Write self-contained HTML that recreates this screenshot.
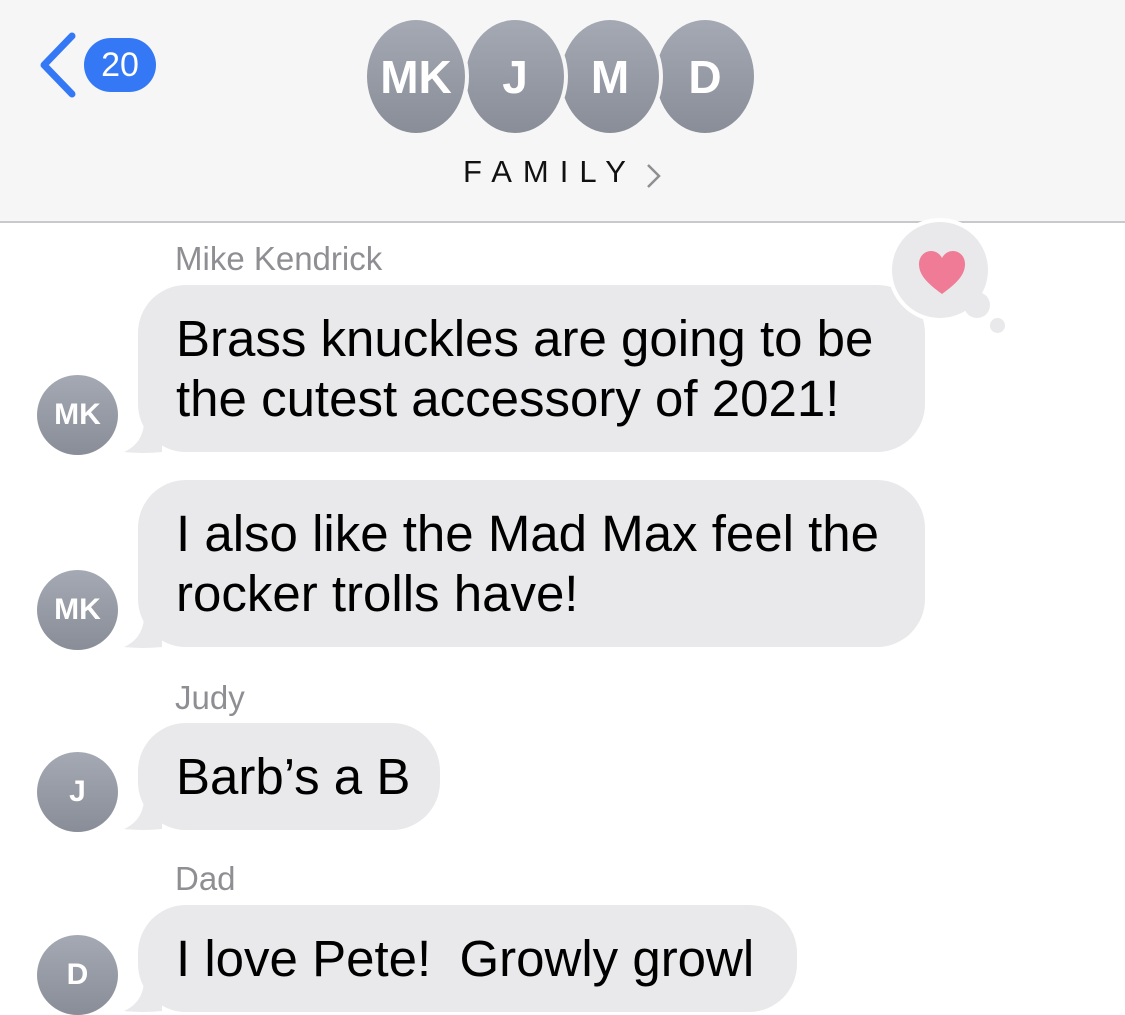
<!DOCTYPE html>
<html><head><meta charset="utf-8"><style>
*{margin:0;padding:0;box-sizing:border-box}
body{width:1125px;height:1015px;overflow:hidden;background:#fff;font-family:"Liberation Sans",Arial,sans-serif;position:relative}
.hdr{position:absolute;left:0;top:0;width:1125px;height:223px;background:#f6f6f6;border-bottom:2px solid #c9c9cb}
.ga{position:absolute;width:106px;height:121px;top:16px;border-radius:50%;background:linear-gradient(#a5a9b3,#898d97);border:4px solid #f6f6f6;color:#fff;font-size:46px;font-weight:bold;display:flex;align-items:center;justify-content:center}
.badge{position:absolute;left:84px;top:38px;width:72px;height:54px;border-radius:27px;background:#3478f6;color:#fff;font-size:34px;display:flex;align-items:center;justify-content:center}
.fam{position:absolute;left:463px;top:154px;font-size:31px;letter-spacing:11px;color:#111}
.name{position:absolute;left:175px;font-size:33px;color:#8e8e93}
.b{position:absolute;left:138px;background:#e9e9eb;border-radius:48px;font-size:51px;line-height:60px;color:#000;padding:0 0 0 38px;display:flex;align-items:center}
.av{position:absolute;left:37px;width:81px;height:80px;border-radius:50%;background:linear-gradient(#a5a9b3,#898d97);color:#fff;font-size:30px;font-weight:bold;display:flex;align-items:center;justify-content:center}
.tail{position:absolute;left:122px;width:40px;height:30px}
</style></head><body>
<div class="hdr"></div>
<svg style="position:absolute;left:36px;top:32px" width="44" height="66"><path d="M36 4 L8 33 L36 62" fill="none" stroke="#3478f6" stroke-width="7" stroke-linecap="round" stroke-linejoin="round"/></svg>
<div class="badge">20</div>
<div class="ga" style="left:652px">D</div>
<div class="ga" style="left:557px">M</div>
<div class="ga" style="left:462px">J</div>
<div class="ga" style="left:363px">MK</div>
<div class="fam">FAMILY</div>
<svg style="position:absolute;left:645px;top:162px" width="18" height="28"><path d="M3 3 L14 14 L3 25" fill="none" stroke="#8e8e93" stroke-width="2.5"/></svg>

<div class="name" style="top:240px">Mike Kendrick</div>
<svg class="tail" style="top:424px" viewBox="0 0 40 30"><path d="M40 0 L40 28 Q20 30 2 28 Q20 20 22 0Z" fill="#e9e9eb"/></svg>
<div class="b" style="top:285px;width:787px;height:167px">Brass knuckles are going to be<br>the cutest accessory of 2021!</div>
<div class="av" style="top:375px">MK</div>
<div style="position:absolute;left:888px;top:218px;width:104px;height:104px;border-radius:50%;background:#e9e9eb;border:4px solid #fff"></div>
<div style="position:absolute;left:964px;top:292px;width:26px;height:26px;border-radius:50%;background:#e9e9eb"></div>
<div style="position:absolute;left:990px;top:318px;width:15px;height:15px;border-radius:50%;background:#e9e9eb"></div>
<svg style="position:absolute;left:917px;top:250px" width="50" height="46" viewBox="0 0 50 46"><path d="M25 44 C10 33 2 25 2 14 C2 6 8 1 14 1 C19 1 23 4 25 8 C27 4 31 1 36 1 C42 1 48 6 48 14 C48 25 40 33 25 44Z" fill="#f07b96"/></svg>

<svg class="tail" style="top:619px" viewBox="0 0 40 30"><path d="M40 0 L40 28 Q20 30 2 28 Q20 20 22 0Z" fill="#e9e9eb"/></svg>
<div class="b" style="top:480px;width:787px;height:167px">I also like the Mad Max feel the<br>rocker trolls have!</div>
<div class="av" style="top:570px">MK</div>

<div class="name" style="top:679px">Judy</div>
<svg class="tail" style="top:801px" viewBox="0 0 40 30"><path d="M40 0 L40 28 Q20 30 2 28 Q20 20 22 0Z" fill="#e9e9eb"/></svg>
<div class="b" style="top:723px;width:302px;height:107px">Barb’s a B</div>
<div class="av" style="top:752px">J</div>

<div class="name" style="top:860px">Dad</div>
<svg class="tail" style="top:983px" viewBox="0 0 40 30"><path d="M40 0 L40 28 Q20 30 2 28 Q20 20 22 0Z" fill="#e9e9eb"/></svg>
<div class="b" style="top:905px;width:659px;height:107px">I love Pete!&nbsp; Growly growl</div>
<div class="av" style="top:935px">D</div>
</body></html>
